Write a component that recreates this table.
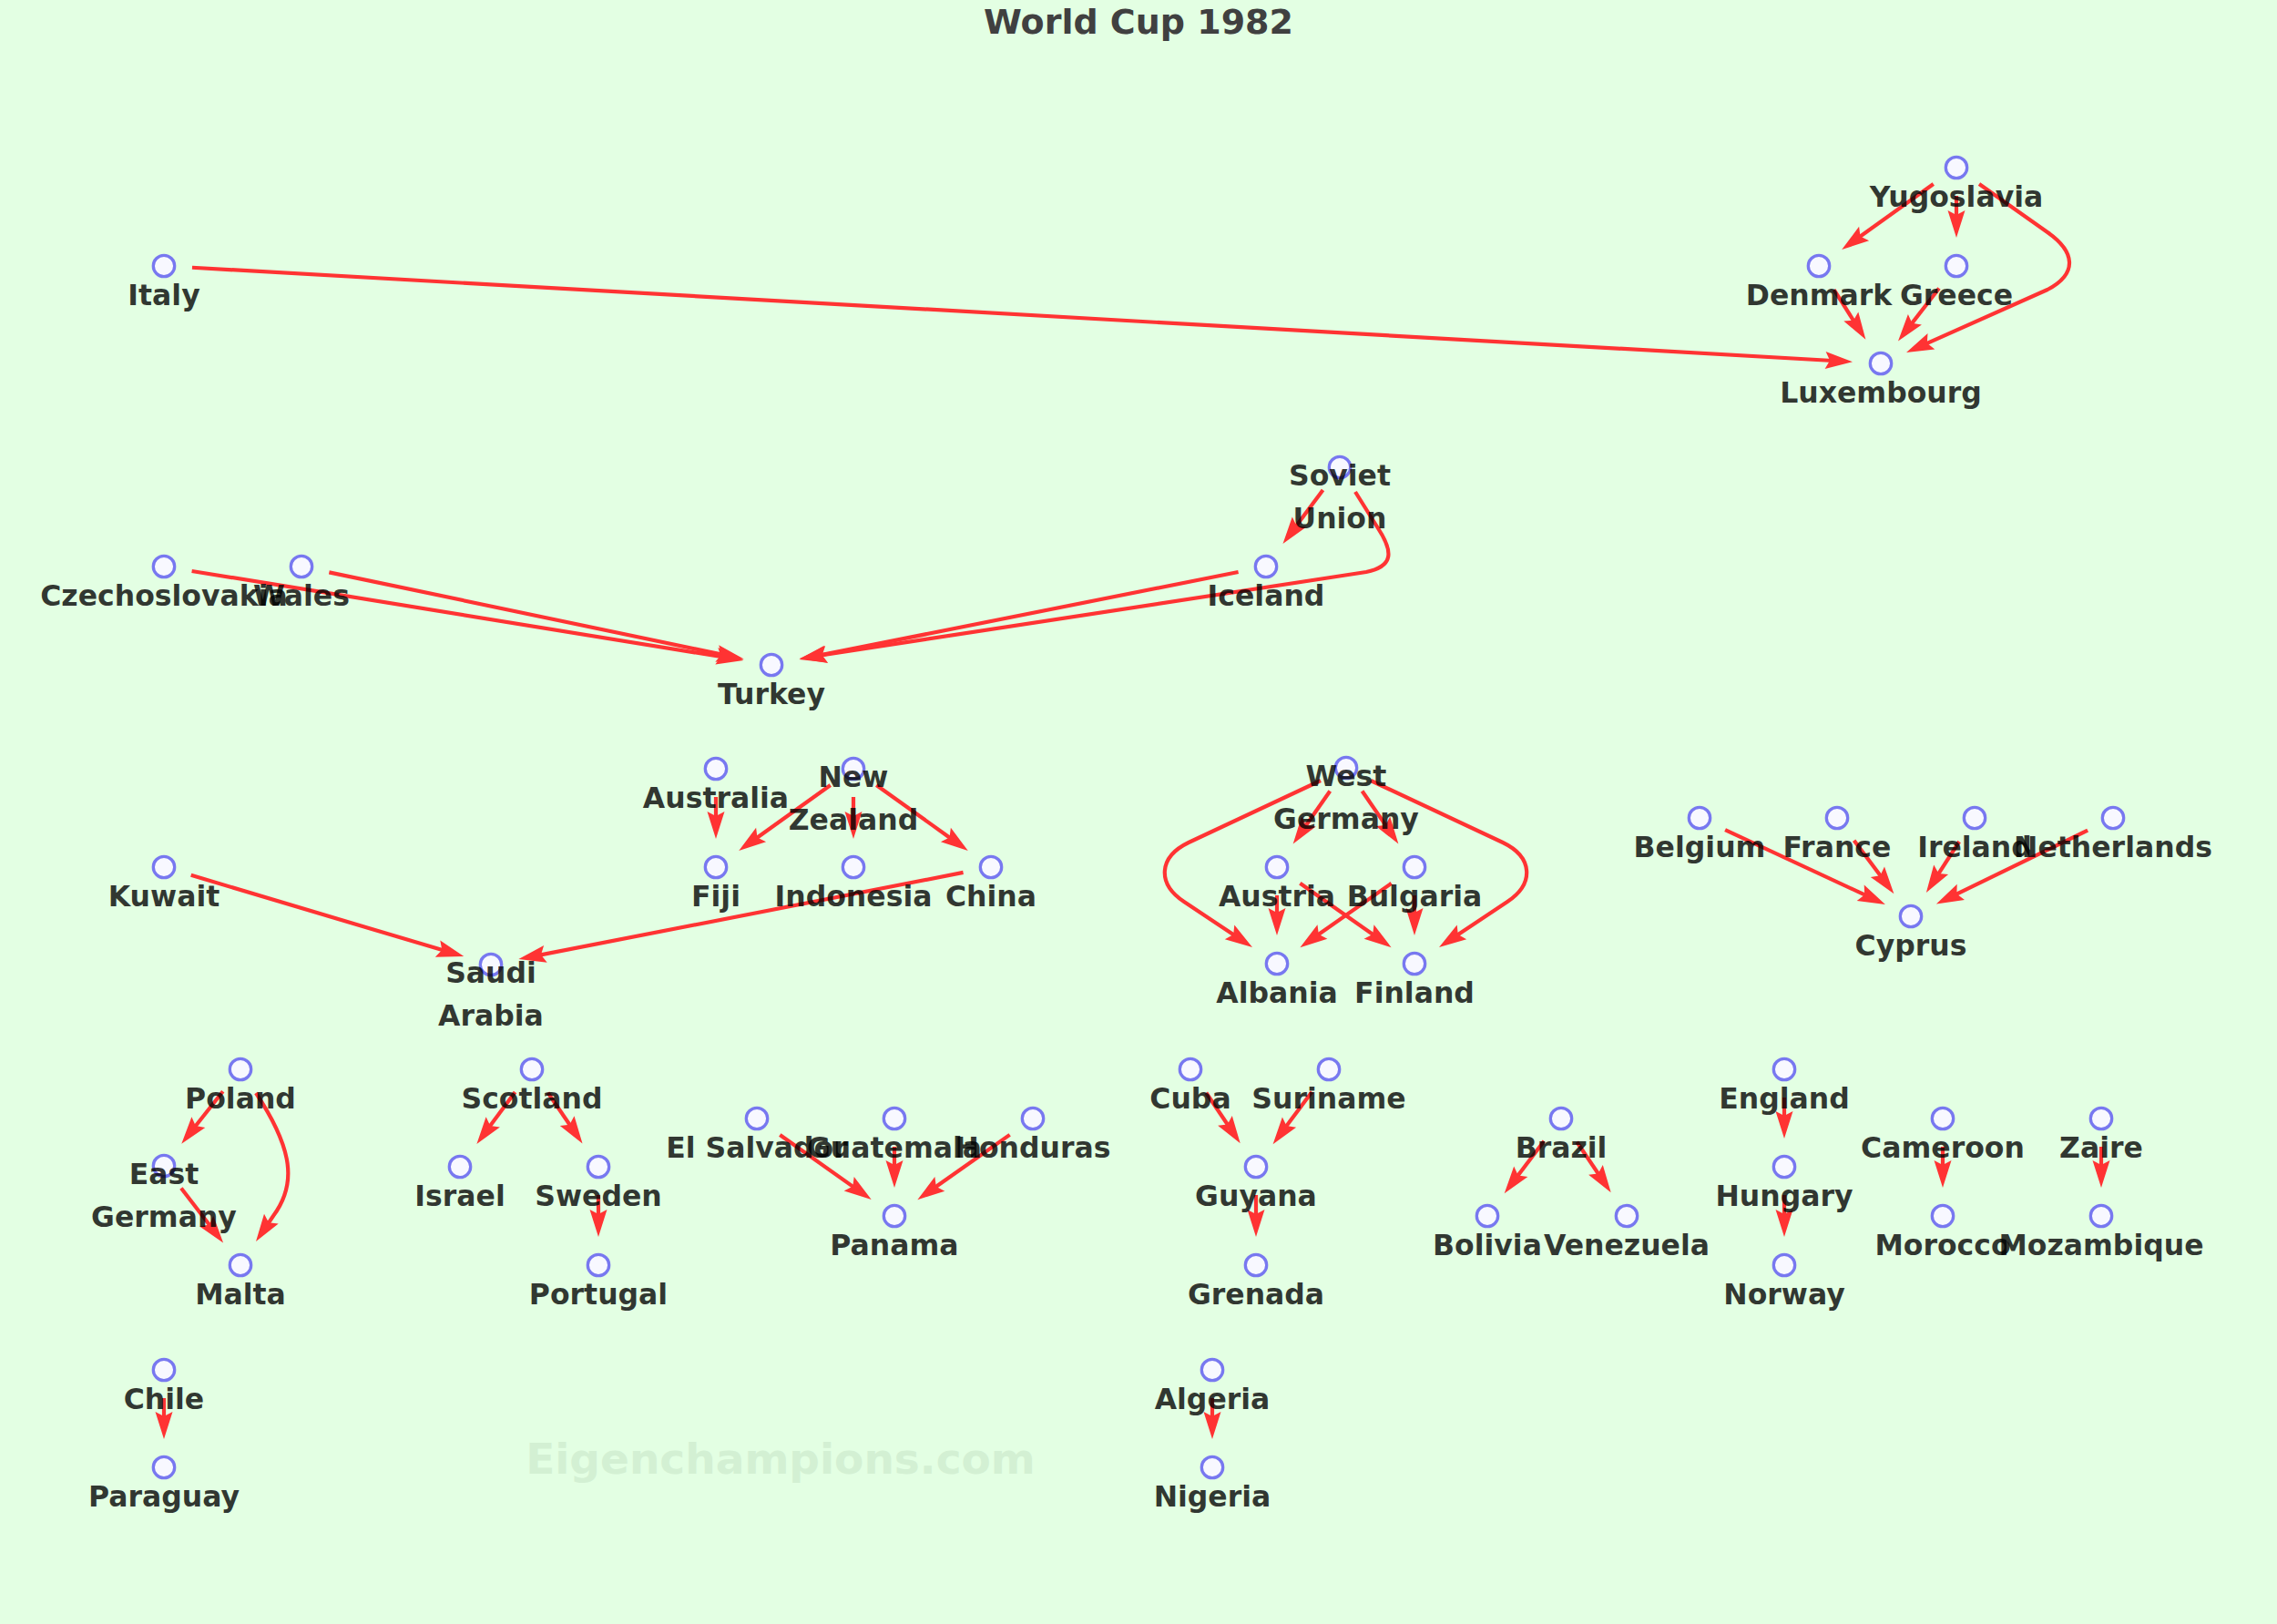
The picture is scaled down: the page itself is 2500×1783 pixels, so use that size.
type Node = { x: number; y: number; lines?: string[] };

const nodes: Record<string, Node> = {
  Yugoslavia: { x: 2148, y: 184 },
  Denmark: { x: 1997, y: 292 },
  Greece: { x: 2148, y: 292 },
  Luxembourg: { x: 2065, y: 399 },
  Italy: { x: 180, y: 292 },
  "Soviet Union": { x: 1471, y: 513, lines: ["Soviet", "Union"] },
  Czechoslovakia: { x: 180, y: 622 },
  Wales: { x: 331, y: 622 },
  Iceland: { x: 1390, y: 622 },
  Turkey: { x: 847, y: 730 },
  Australia: { x: 786, y: 844 },
  "New Zealand": { x: 937, y: 844, lines: ["New", "Zealand"] },
  Fiji: { x: 786, y: 952 },
  Indonesia: { x: 937, y: 952 },
  China: { x: 1088, y: 952 },
  Kuwait: { x: 180, y: 952 },
  "Saudi Arabia": { x: 539, y: 1059, lines: ["Saudi", "Arabia"] },
  "West Germany": { x: 1478, y: 843, lines: ["West", "Germany"] },
  Austria: { x: 1402, y: 952 },
  Bulgaria: { x: 1553, y: 952 },
  Albania: { x: 1402, y: 1058 },
  Finland: { x: 1553, y: 1058 },
  Belgium: { x: 1866, y: 898 },
  France: { x: 2017, y: 898 },
  Ireland: { x: 2168, y: 898 },
  Netherlands: { x: 2320, y: 898 },
  Cyprus: { x: 2098, y: 1006 },
  Poland: { x: 264, y: 1174 },
  "East Germany": { x: 180, y: 1280, lines: ["East", "Germany"] },
  Malta: { x: 264, y: 1389 },
  Scotland: { x: 584, y: 1174 },
  Israel: { x: 505, y: 1281 },
  Sweden: { x: 657, y: 1281 },
  Portugal: { x: 657, y: 1389 },
  "El Salvador": { x: 831, y: 1228 },
  Guatemala: { x: 982, y: 1228 },
  Honduras: { x: 1134, y: 1228 },
  Panama: { x: 982, y: 1335 },
  Cuba: { x: 1307, y: 1174 },
  Suriname: { x: 1459, y: 1174 },
  Guyana: { x: 1379, y: 1281 },
  Grenada: { x: 1379, y: 1389 },
  Brazil: { x: 1714, y: 1228 },
  Bolivia: { x: 1633, y: 1335 },
  Venezuela: { x: 1786, y: 1335 },
  England: { x: 1959, y: 1174 },
  Hungary: { x: 1959, y: 1281 },
  Norway: { x: 1959, y: 1389 },
  Cameroon: { x: 2133, y: 1228 },
  Morocco: { x: 2133, y: 1335 },
  Zaire: { x: 2307, y: 1228 },
  Mozambique: { x: 2307, y: 1335 },
  Chile: { x: 180, y: 1504 },
  Paraguay: { x: 180, y: 1611 },
  Algeria: { x: 1331, y: 1504 },
  Nigeria: { x: 1331, y: 1611 },
};

const straight: [string, string][] = [
  ["Italy", "Luxembourg"],
  ["Yugoslavia", "Denmark"],
  ["Yugoslavia", "Greece"],
  ["Denmark", "Luxembourg"],
  ["Greece", "Luxembourg"],
  ["Soviet Union", "Iceland"],
  ["Czechoslovakia", "Turkey"],
  ["Wales", "Turkey"],
  ["Iceland", "Turkey"],
  ["Australia", "Fiji"],
  ["New Zealand", "Fiji"],
  ["New Zealand", "Indonesia"],
  ["New Zealand", "China"],
  ["Kuwait", "Saudi Arabia"],
  ["China", "Saudi Arabia"],
  ["West Germany", "Austria"],
  ["West Germany", "Bulgaria"],
  ["Austria", "Albania"],
  ["Austria", "Finland"],
  ["Bulgaria", "Albania"],
  ["Bulgaria", "Finland"],
  ["Belgium", "Cyprus"],
  ["France", "Cyprus"],
  ["Ireland", "Cyprus"],
  ["Netherlands", "Cyprus"],
  ["Poland", "East Germany"],
  ["East Germany", "Malta"],
  ["Scotland", "Israel"],
  ["Scotland", "Sweden"],
  ["Sweden", "Portugal"],
  ["El Salvador", "Panama"],
  ["Guatemala", "Panama"],
  ["Honduras", "Panama"],
  ["Cuba", "Guyana"],
  ["Suriname", "Guyana"],
  ["Guyana", "Grenada"],
  ["Brazil", "Bolivia"],
  ["Brazil", "Venezuela"],
  ["England", "Hungary"],
  ["Hungary", "Norway"],
  ["Cameroon", "Morocco"],
  ["Zaire", "Mozambique"],
  ["Chile", "Paraguay"],
  ["Algeria", "Nigeria"],
];

// curved edges: path up to last point, then arrow tip
const curved: { d: string; from: [number, number]; tip: [number, number] }[] = [
  { d: "M 2173 202 L 2248 255 C 2278 276 2282 300 2248 318", from: [2248, 318], tip: [2093, 387] },
  { d: "M 1488 540 L 1513 580 C 1530 606 1530 622 1500 628", from: [1500, 628], tip: [878, 723] },
  { d: "M 1450 857 L 1305 925 C 1272 941 1270 970 1300 990", from: [1300, 990], tip: [1375, 1040] },
  { d: "M 1505 857 L 1650 925 C 1683 941 1685 970 1655 990", from: [1655, 990], tip: [1580, 1040] },
  { d: "M 281 1200 C 322 1262 326 1300 300 1335", from: [300, 1335], tip: [281, 1363] },
];

const RED = "#ff3333";

function arrowHead(tx: number, ty: number, ux: number, uy: number) {
  const L = 30;
  const W = 9.5;
  const notch = 5;
  const nx = -uy;
  const ny = ux;
  const bx = tx - L * ux;
  const by = ty - L * uy;
  const pts = [
    [tx, ty],
    [bx + W * nx, by + W * ny],
    [tx - (L - notch) * ux, ty - (L - notch) * uy],
    [bx - W * nx, by - W * ny],
  ];
  return pts.map((p) => p.map((v) => v.toFixed(1)).join(",")).join(" ");
}

function Straight({ a, b }: { a: Node; b: Node }) {
  const dx = b.x - a.x;
  const dy = b.y - a.y;
  const len = Math.hypot(dx, dy);
  const ux = dx / len;
  const uy = dy / len;
  const sx = a.x + 31 * ux;
  const sy = a.y + 31 * uy;
  const tx = b.x - 31 * ux;
  const ty = b.y - 31 * uy;
  return (
    <g>
      <line x1={sx} y1={sy} x2={tx - 22 * ux} y2={ty - 22 * uy} stroke={RED} strokeWidth={4.2} />
      <polygon points={arrowHead(tx, ty, ux, uy)} fill={RED} />
    </g>
  );
}

function Curved({ d, from, tip }: { d: string; from: [number, number]; tip: [number, number] }) {
  const dx = tip[0] - from[0];
  const dy = tip[1] - from[1];
  const len = Math.hypot(dx, dy);
  const ux = dx / len;
  const uy = dy / len;
  const base = `L ${(tip[0] - 22 * ux).toFixed(1)} ${(tip[1] - 22 * uy).toFixed(1)}`;
  return (
    <g>
      <path d={`${d} ${base}`} fill="none" stroke={RED} strokeWidth={4.2} strokeLinejoin="round" />
      <polygon points={arrowHead(tip[0], tip[1], ux, uy)} fill={RED} />
    </g>
  );
}

export default function App() {
  return (
    <div className="relative w-[2500px] h-[1783px] overflow-hidden bg-[#e3ffe3] font-['DejaVu_Sans',sans-serif]">
      <h1 className="pt-[5px] text-center text-[38px] font-bold leading-none text-[#404040]">World Cup 1982</h1>

      <svg className="absolute inset-0" width={2500} height={1783} viewBox="0 0 2500 1783">
        <text
          x={857}
          y={1618}
          textAnchor="middle"
          fontFamily="DejaVu Sans, sans-serif"
          fontWeight="bold"
          fontSize={47}
          fill="#d3f0d3"
        >
          Eigenchampions.com
        </text>

        {straight.map(([f, t]) => (
          <Straight key={`${f}-${t}`} a={nodes[f]} b={nodes[t]} />
        ))}
        {curved.map((c, i) => (
          <Curved key={i} {...c} />
        ))}

        {Object.entries(nodes).map(([name, n]) => (
          <circle key={name} cx={n.x} cy={n.y} r={11.7} fill="#f8f8ff" stroke="#7878f0" strokeWidth={3.3} />
        ))}

        <g fontFamily="DejaVu Sans, sans-serif" fontWeight="bold" fontSize={31.5} fill="#000" fillOpacity={0.8} textAnchor="middle">
          {Object.entries(nodes).map(([name, n]) => {
            const lines = n.lines ?? [name];
            if (lines.length === 1) {
              return (
                <text key={name} x={n.x} y={n.y + 43}>
                  {name}
                </text>
              );
            }
            return (
              <text key={name} x={n.x} y={n.y + 20}>
                <tspan x={n.x}>{lines[0]}</tspan>
                <tspan x={n.x} dy={47}>
                  {lines[1]}
                </tspan>
              </text>
            );
          })}
        </g>
      </svg>
    </div>
  );
}
